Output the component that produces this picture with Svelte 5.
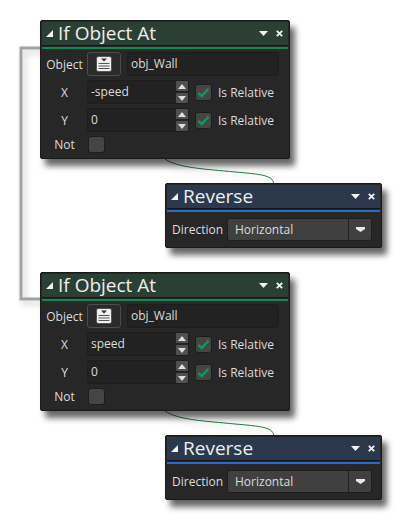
<script>
  // node graph: the two "If Object At" blocks, each followed by a "Reverse" block
  const ifNodes = [
    { top: 20, x: '-speed', y: '0' },
    { top: 272, x: 'speed', y: '0' }
  ];
  const reverseNodes = [{ top: 183 }, { top: 435 }];
</script>

{#snippet header(title)}
  <div class="head">
    <svg class="collapse" width="7" height="7" viewBox="0 0 7 7"><path d="M0 7 H7 V0 Z" fill="#f2f2f2" /></svg>
    <span class="title">{title}</span>
    <svg class="menu" width="9" height="5" viewBox="0 0 9 5"><path d="M0 0 H9 L4.5 5 Z" fill="#f2f2f2" /></svg>
    <svg class="close" width="7" height="7" viewBox="0 0 7 7"><path d="M0.8 0.8 L6.2 6.2 M6.2 0.8 L0.8 6.2" stroke="#f2f2f2" stroke-width="1.8" /></svg>
  </div>
{/snippet}

{#snippet check()}
  <span class="box">
    <svg width="13" height="11" viewBox="0 0 13 11"><path d="M1.5 6 L4.8 9 L11.5 1.8" fill="none" stroke="#0d9a5a" stroke-width="2.4" /></svg>
  </span>
{/snippet}

{#snippet spinRow(label, value)}
  <span class="label">{label}</span>
  <div class="spin">
    <span class="spin-value">{value}</span>
    <div class="arrows">
      <span class="arrow"><svg width="8" height="5" viewBox="0 0 8 5"><path d="M4 0 L8 5 H0 Z" fill="#dedede" /></svg></span>
      <span class="arrow"><svg width="8" height="5" viewBox="0 0 8 5"><path d="M0 0 H8 L4 5 Z" fill="#dedede" /></svg></span>
    </div>
  </div>
  {@render check()}
  <span class="rel">Is Relative</span>
{/snippet}

<div class="canvas">
  <svg class="wires" width="403" height="520" viewBox="0 0 403 520">
    <path d="M40 48 H21 V299 H40" fill="none" stroke="#a3a3a3" stroke-width="3" />
    <path d="M165 159 C178 168 205 169 235 172 C258 174 273 175 273.5 183" fill="none" stroke="#1c7a3c" stroke-width="1" />
    <path d="M165 411 C178 420 205 421 235 424 C258 426 273 427 273.5 435" fill="none" stroke="#1c7a3c" stroke-width="1" />
  </svg>

  {#each ifNodes as node}
    <div class="node if" style="top: {node.top}px">
      {@render header('If Object At')}
      <div class="rule"></div>
      <div class="form">
        <span class="label">Object</span>
        <div class="picker">
          <svg width="16" height="16" viewBox="0 0 16 16">
            <rect x="0.5" y="0.5" width="15" height="15" rx="2" fill="#f0f0f0" stroke="#555" />
            <path d="M5 2.5 H11 L8 5.5 Z" fill="#333" />
            <path d="M2.5 7.5 H13.5 M2.5 10 H13.5 M2.5 12.5 H13.5" stroke="#555" stroke-width="1" />
          </svg>
        </div>
        <div class="object">obj_Wall</div>
        {@render spinRow('X', node.x)}
        {@render spinRow('Y', node.y)}
        <span class="label">Not</span>
        <span class="box not"></span>
      </div>
    </div>
  {/each}

  {#each reverseNodes as node}
    <div class="node reverse" style="top: {node.top}px">
      {@render header('Reverse')}
      <div class="rule"></div>
      <div class="direction">
        <span class="dir-label">Direction</span>
        <div class="select">
          <span class="select-value">Horizontal</span>
          <span class="select-btn">
            <svg width="9" height="5" viewBox="0 0 9 5"><path d="M0 0 H9 V2 L4.5 5 L0 2 Z" fill="#e8e8e8" /></svg>
          </span>
        </div>
      </div>
    </div>
  {/each}
</div>

<style>
  :global(body) {
    background: #fff;
  }

  .canvas {
    position: relative;
    width: 403px;
    height: 520px;
    overflow: hidden;
    font-family: 'Open Sans', sans-serif;
    color: #dcdcdc;
    font-size: 12px;
  }

  .wires {
    position: absolute;
    left: 0;
    top: 0;
    filter: drop-shadow(3px 4px 3px rgba(0, 0, 0, 0.2));
  }

  .node {
    position: absolute;
    box-sizing: border-box;
    background: #272727;
    border: 1px solid #1a1a1a;
    border-radius: 2px;
    box-shadow: 5px 7px 6px rgba(0, 0, 0, 0.6);
    padding: 1px;
  }

  .if {
    left: 40px;
    width: 250px;
    height: 139px;
    --head: #2b4035;
    --rule: #0c8a50;
  }

  .reverse {
    left: 165px;
    width: 217px;
    height: 65px;
    --head: #2c394d;
    --rule: #2a6ac4;
  }

  .head {
    display: flex;
    align-items: center;
    height: 23px;
    background: var(--head);
    border-bottom: 1px solid #161616;
    padding: 0 5px 0 4px;
  }

  .collapse {
    margin-right: 5px;
    flex: none;
  }

  .title {
    flex: 1;
    font-size: 19px;
    line-height: 23px;
    color: #eeeeee;
    white-space: nowrap;
  }

  .menu {
    margin-right: 8px;
  }

  .rule {
    height: 2px;
    background: var(--rule);
    margin-top: 1px;
  }

  .form {
    display: grid;
    grid-template-columns: 42px 34px 6px 56px 6px 6px 17px 6px 1fr;
    grid-template-rows: 24px 24px 24px 17px;
    row-gap: 4px;
    align-items: center;
    padding: 3px 9px 0 3px;
  }

  .label {
    text-align: center;
    padding-right: 3px;
    color: #dcdcdc;
  }

  .picker {
    grid-column: 2;
    height: 24px;
    box-sizing: border-box;
    display: flex;
    align-items: center;
    justify-content: center;
    border: 1px solid #4c4c4c;
    border-radius: 3px;
    background: #2a2a2a;
  }

  .object {
    grid-column: 4 / -1;
    height: 24px;
    box-sizing: border-box;
    padding-left: 3px;
    line-height: 22px;
    background: #222222;
    border: 1px solid #1d1d1d;
    border-radius: 3px;
  }

  .spin {
    grid-column: 2 / 6;
    height: 24px;
    box-sizing: border-box;
    display: flex;
    justify-content: space-between;
    background: #222222;
    border-radius: 3px;
    border: 1px solid #1d1d1d;
  }

  .spin-value {
    padding-left: 3px;
    line-height: 22px;
  }

  .arrows {
    display: flex;
    flex-direction: column;
    justify-content: space-between;
  }

  .arrow {
    width: 12px;
    height: 10px;
    display: flex;
    align-items: center;
    justify-content: center;
    background: #505050;
    border-radius: 1px;
  }

  .box {
    grid-column: 7;
    width: 17px;
    height: 17px;
    display: flex;
    align-items: center;
    justify-content: center;
    background: #454545;
    border: 1px solid #1d1d1d;
    border-radius: 3px;
    box-sizing: border-box;
  }

  .box.not {
    grid-column: 2;
    margin-left: 1px;
  }

  .rel {
    grid-column: 9;
    white-space: nowrap;
  }

  .direction {
    display: flex;
    align-items: center;
    padding: 6px 0 0 5px;
  }

  .dir-label {
    width: 55px;
    flex: none;
  }

  .select {
    display: flex;
    width: 145px;
    height: 23px;
    box-sizing: border-box;
    background: #404040;
    border: 1px solid #1f1f1f;
    border-radius: 3px;
  }

  .select-value {
    flex: 1;
    padding-left: 7px;
    line-height: 21px;
  }

  .select-btn {
    width: 22px;
    display: flex;
    align-items: center;
    justify-content: center;
    border-left: 1px solid #222;
  }
</style>
